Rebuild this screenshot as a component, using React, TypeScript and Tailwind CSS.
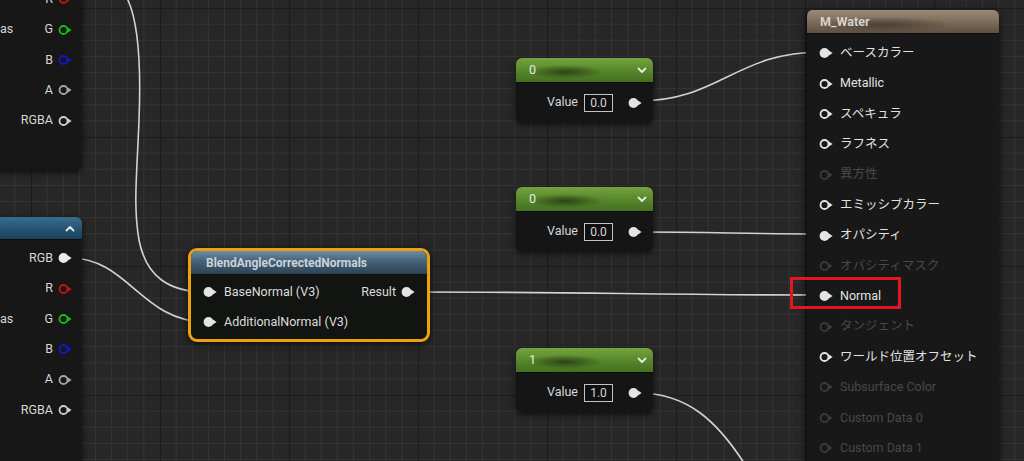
import React from "react";

type PinKind = "filled" | "ring" | "off";

const FONT = "font-[Roboto,'Noto_Sans_CJK_JP',sans-serif]";

const Pin = ({ kind = "filled", color = "#e4e4e4" }: { kind?: PinKind; color?: string }) => {
  const c = kind === "off" ? "#3a3b3a" : color;
  return (
    <svg width="15" height="12" viewBox="0 0 15 12" className="flex-none">
      {kind === "filled" ? (
        <circle cx="5.5" cy="6" r="4.9" fill={c} />
      ) : (
        <circle cx="5.5" cy="6" r="4" fill="none" stroke={c} strokeWidth="1.8" />
      )}
      <path d="M9.6 3.2 L13.6 6 L9.6 8.8 Z" fill={c} />
    </svg>
  );
};

const Chevron = ({ up }: { up?: boolean }) => (
  <svg width="10" height="7" viewBox="0 0 10 7">
    <polyline
      points={up ? "1.5,5.5 5,2 8.5,5.5" : "1.5,1.5 5,5 8.5,1.5"}
      fill="none"
      stroke="#e8e8e8"
      strokeWidth="1.8"
      strokeLinecap="round"
      strokeLinejoin="round"
    />
  </svg>
);

// right-aligned output row of the texture sample nodes
const OutRow = ({ label, color, kind = "ring", left }: { label: string; color: string; kind?: PinKind; left?: string }) => (
  <div className="flex items-center h-[30.4px] pr-[9px] pl-[20px]">
    <span className="text-[12.5px] text-[#d6d6d6]">{left}</span>
    <span className="ml-auto text-[12.5px] text-[#d6d6d6] mr-[5px]">{label}</span>
    <Pin kind={kind} color={color} />
  </div>
);

const ConstNode = ({ top, title, value }: { top: string; title: string; value: string }) => (
  <div className={`absolute left-[516px] ${top} w-[137px] h-[64px] rounded-[6px] bg-[#141514] shadow-[0_2px_6px_rgba(0,0,0,0.7)] overflow-hidden`}>
    <div className="h-[25px] flex items-center pl-[13px] pr-[6px] bg-[radial-gradient(ellipse_38px_7px_at_36%_58%,#2b4416,transparent),linear-gradient(to_bottom,#74a33e,#4f7e27_70%,#43701f)] border-b border-[#0c0d0c]">
      <span className="text-[12.5px] text-[#e4ecdf]">{title}</span>
      <span className="ml-auto">
        <Chevron />
      </span>
    </div>
    <div className="h-[39px] flex items-center justify-end pr-[10px]">
      <span className="text-[12.5px] text-[#d6d6d6]">Value</span>
      <span className="ml-[6px] w-[29px] h-[18px] border border-[#c4c4c4] flex items-center justify-center text-[12px] text-[#d6d6d6] bg-[#0f100f]">
        {value}
      </span>
      <span className="ml-[15px] flex">
        <Pin />
      </span>
    </div>
  </div>
);

const waterPins: { label: string; kind: PinKind }[] = [
  { label: "ベースカラー", kind: "filled" },
  { label: "Metallic", kind: "ring" },
  { label: "スペキュラ", kind: "ring" },
  { label: "ラフネス", kind: "ring" },
  { label: "異方性", kind: "off" },
  { label: "エミッシブカラー", kind: "ring" },
  { label: "オパシティ", kind: "filled" },
  { label: "オパシティマスク", kind: "off" },
  { label: "Normal", kind: "filled" },
  { label: "タンジェント", kind: "off" },
  { label: "ワールド位置オフセット", kind: "ring" },
  { label: "Subsurface Color", kind: "off" },
  { label: "Custom Data 0", kind: "off" },
  { label: "Custom Data 1", kind: "off" },
];

// canvas grid: minor every 16.125px, major every 129px
const minor = [1, 2, 3, 4, 5, 6, 7].map((k) => k * 16.125);

export default function App() {
  return (
    <div className={`relative w-[1024px] h-[461px] overflow-hidden bg-[#272727] ${FONT}`}>
      <svg className="absolute inset-0" width="1024" height="461">
        <defs>
          <pattern id="grid" x="31" y="8" width="129" height="129" patternUnits="userSpaceOnUse">
            {minor.map((p) => (
              <g key={p}>
                <line x1={p} y1="0" x2={p} y2="129" stroke="#333333" strokeWidth="1" />
                <line x1="0" y1={p} x2="129" y2={p} stroke="#333333" strokeWidth="1" />
              </g>
            ))}
            <line x1="0.5" y1="0" x2="0.5" y2="129" stroke="#1c1c1c" strokeWidth="1.2" />
            <line x1="0" y1="0.5" x2="129" y2="0.5" stroke="#1c1c1c" strokeWidth="1.2" />
          </pattern>
        </defs>
        <rect width="1024" height="461" fill="url(#grid)" />
        <g fill="none" stroke="#d2d2d2" strokeWidth="1.6" strokeLinecap="round">
          <path d="M127,-2 C139,22 141,70 139,120 C137,175 133,205 139,240 C146,276 168,292 206,292" />
          <path d="M70,258 C128,258 142,322 206,322" />
          <path d="M412,292 C600,292 640,295 822,295" />
          <path d="M638,101 C720,101 735,52 822,52" />
          <path d="M638,232 C720,232 740,234 822,234" />
          <path d="M638,393 C688,393 718,422 746,466" />
        </g>
      </svg>

      {/* texture sample node, top left */}
      <div className="absolute left-[-20px] top-[-20px] w-[102px] h-[190px] rounded-[6px] bg-[#161716] shadow-[0_2px_6px_rgba(0,0,0,0.7)] pt-[4px]">
        <OutRow label="R" color="#c81212" />
        <OutRow label="G" color="#12c012" left="as" />
        <OutRow label="B" color="#1018cc" />
        <OutRow label="A" color="#a6a6a6" />
        <OutRow label="RGBA" color="#cfcfcf" />
      </div>

      {/* texture sample node, bottom left */}
      <div className="absolute left-[-20px] top-[217px] w-[102px] h-[260px] rounded-[6px] bg-[#161716] shadow-[0_2px_6px_rgba(0,0,0,0.7)] overflow-hidden">
        <div className="h-[23px] flex items-center justify-end pr-[7px] bg-[linear-gradient(to_bottom,#3a6d8d,#22516e_60%,#1b4159)] border-b border-[#0c0d0c]">
          <Chevron up />
        </div>
        <div className="pt-[3px]">
          <OutRow label="RGB" color="#ececec" kind="filled" />
          <OutRow label="R" color="#c81212" />
          <OutRow label="G" color="#12c012" left="as" />
          <OutRow label="B" color="#1018cc" />
          <OutRow label="A" color="#a6a6a6" />
          <OutRow label="RGBA" color="#cfcfcf" />
        </div>
      </div>

      {/* BlendAngleCorrectedNormals */}
      <div className="absolute left-[188px] top-[248px] w-[242px] h-[94px] rounded-[9px] border-[3px] border-[#eea110] bg-[#121412] shadow-[0_2px_8px_rgba(0,0,0,0.7)] overflow-hidden">
        <div className="h-[24px] flex items-center pl-[15px] bg-[linear-gradient(to_bottom,#6d8ca4,#456277_45%,#2d4352)] border-b border-[#0b0c0b]">
          <span className="text-[12px] font-bold text-[#c9d2da]">BlendAngleCorrectedNormals</span>
        </div>
        <div className="pt-[2px]">
          <div className="h-[30px] flex items-center pl-[12px] pr-[11px]">
            <Pin />
            <span className="ml-[6px] text-[12.5px] text-[#dcdcdc]">BaseNormal (V3)</span>
            <span className="ml-auto mr-[5px] text-[12.5px] text-[#dcdcdc]">Result</span>
            <Pin />
          </div>
          <div className="h-[30px] flex items-center pl-[12px]">
            <Pin />
            <span className="ml-[6px] text-[12.5px] text-[#dcdcdc]">AdditionalNormal (V3)</span>
          </div>
        </div>
      </div>

      <ConstNode top="top-[58px]" title="0" value="0.0" />
      <ConstNode top="top-[187px]" title="0" value="0.0" />
      <ConstNode top="top-[348px]" title="1" value="1.0" />

      {/* M_Water result node */}
      <div className="absolute left-[806px] top-[10px] w-[193px] h-[470px] rounded-[6px] bg-[#171817] border-l border-[#0e0f0e] shadow-[0_2px_8px_rgba(0,0,0,0.7)] overflow-hidden">
        <div className="h-[24px] flex items-center pl-[13px] pt-[1px] bg-[radial-gradient(ellipse_70px_8px_at_40%_65%,#4a4035,transparent),linear-gradient(to_bottom,#9a8b78,#7a6a57_55%,#5e5143)] border-b border-[#0c0d0c]">
          <span className="text-[12.5px] font-bold text-[#d8d2ca]">M_Water</span>
        </div>
        <div className="pt-[4px]">
          {waterPins.map((p) => (
            <div key={p.label} className="h-[30.4px] flex items-center pl-[12px]">
              <Pin kind={p.kind} />
              <span className={`ml-[6px] text-[12.5px] ${p.kind === "off" ? "text-[#474847]" : "text-[#e2e2e2]"}`}>
                {p.label}
              </span>
            </div>
          ))}
        </div>
      </div>

      {/* highlight */}
      <div className="absolute left-[790px] top-[277px] w-[111px] h-[32px] border-[3px] border-[#e3161d]" />
    </div>
  );
}
